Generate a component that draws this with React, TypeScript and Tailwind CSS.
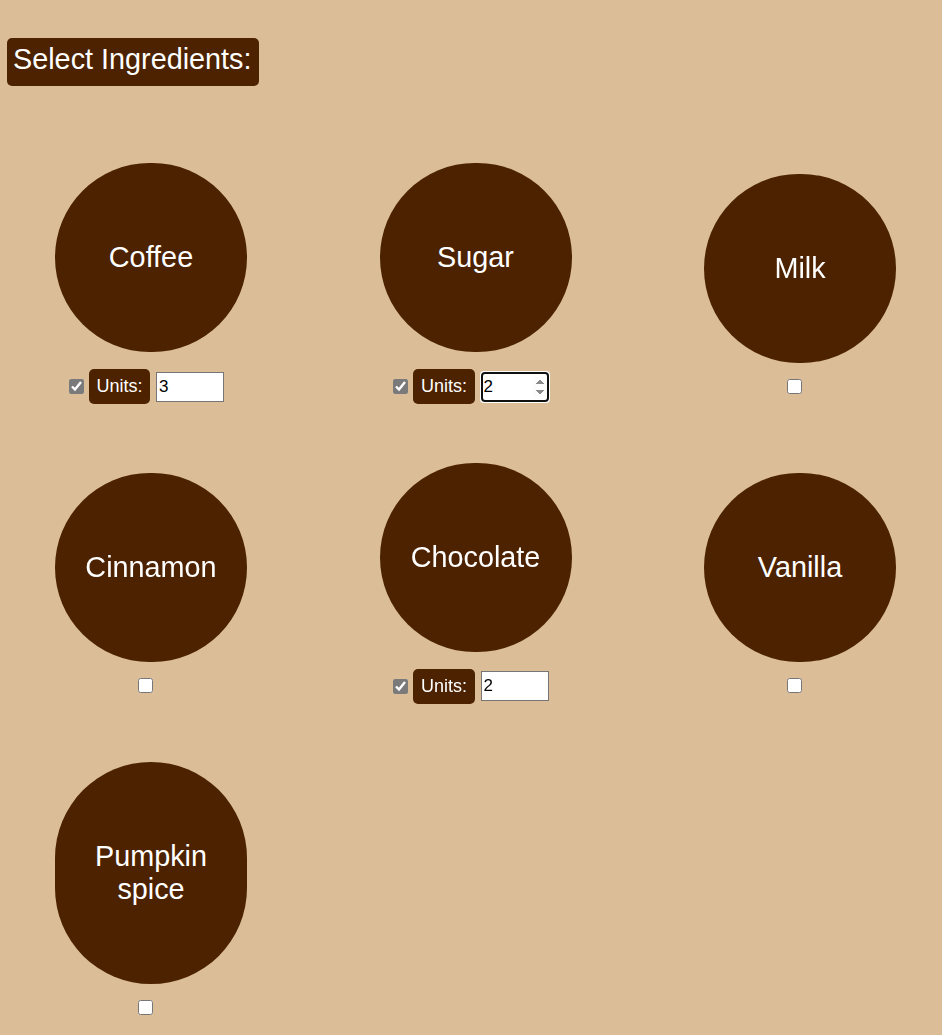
import React, { useState } from "react";

type Item = { name: string; checked: boolean; units: number; focus?: boolean };

const initial: Item[] = [
  { name: "Coffee", checked: true, units: 3 },
  { name: "Sugar", checked: true, units: 2, focus: true },
  { name: "Milk", checked: false, units: 1 },
  { name: "Cinnamon", checked: false, units: 1 },
  { name: "Chocolate", checked: true, units: 2 },
  { name: "Vanilla", checked: false, units: 1 },
  { name: "Pumpkin spice", checked: false, units: 1 },
];

export default function App() {
  const [items, setItems] = useState<Item[]>(initial);

  const update = (i: number, patch: Partial<Item>) =>
    setItems((prev) => prev.map((it, idx) => (idx === i ? { ...it, ...patch } : it)));

  return (
    <div
      className="min-h-[1035px] w-full bg-[#dbbe98] pt-[38px] pb-[20px]"
      style={{ fontFamily: '"Liberation Sans", Arial, sans-serif' }}
    >
      <div className="ml-[7px] flex h-[48px] w-fit items-center rounded-[5px] bg-[#4c2200] pb-[6px] pl-[6px] pr-[7px] text-[28.8px] leading-[33px] text-white">
        Select Ingredients:
      </div>

      <div className="mt-[77px] grid grid-cols-[192px_192px_192px] items-center gap-x-[132.5px] gap-y-[58.5px] pl-[55px]">
        {items.map((it, i) => (
          <div key={it.name} className="flex flex-col items-center">
            <div className="w-[192px] rounded-full bg-[#4c2200] py-[78px] text-center text-[28.8px] leading-[33px] text-white">
              {it.name.split(" ").map((w, k) => (
                <div key={k}>{w}</div>
              ))}
            </div>
            {it.checked ? (
              <div className="mt-[17px] flex h-[35px] items-center pr-[9px]">
                <input
                  type="checkbox"
                  checked
                  onChange={() => update(i, { checked: false })}
                  className="m-0 h-[15px] w-[15px] accent-[#7a7a7a]"
                />
                <span className="ml-[5px] flex h-[35px] items-center rounded-[5px] bg-[#4c2200] px-[7.5px] text-[18px] leading-[21px] text-white">
                  Units:
                </span>
                <input
                  type="number"
                  autoFocus={it.focus}
                  value={it.units}
                  onChange={(e) => update(i, { units: Number(e.target.value) })}
                  className="ml-[6px] h-[30px] w-[68px] border border-[#767676] bg-white pl-[2px] text-[17px] text-black"
                />
              </div>
            ) : (
              <div className="mt-[16px] flex h-[15px] items-center pr-[11px]">
                <input
                  type="checkbox"
                  checked={false}
                  onChange={() => update(i, { checked: true })}
                  className="m-0 h-[15px] w-[15px] accent-[#7a7a7a]"
                />
              </div>
            )}
          </div>
        ))}
      </div>
    </div>
  );
}
